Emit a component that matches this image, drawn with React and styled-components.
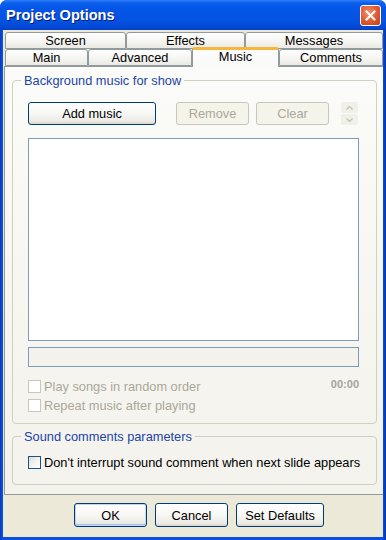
import React from "react";
import styled, { createGlobalStyle } from "styled-components";

const Global = createGlobalStyle`
  html, body { margin: 0; padding: 0; background: #ffffff; }
  body { font-family: "Liberation Sans", Arial, sans-serif; font-size: 12px; }
  * { box-sizing: border-box; }
`;

const Window = styled.div`
  width: 386px;
  height: 540px;
  display: flex;
  flex-direction: column;
  background: linear-gradient(90deg, #0838b8 0, #0a4fe0 2px, #0a4fe0 383px, #0034a8 386px);
  padding: 0 3px 3px 3px;
  border-radius: 7px 7px 0 0;
  overflow: hidden;
`;

const TitleBar = styled.div`
  height: 30px;
  margin: 0 -3px;
  padding: 0 5px 0 6px;
  display: flex;
  align-items: center;
  justify-content: space-between;
  background: linear-gradient(180deg, #2f7cf5 0, #0a5fee 3px, #0556e8 8px, #0453e2 20px, #0449d6 27px, #0040c4 30px);
`;

const Title = styled.span`
  color: #ffffff;
  font-family: "Liberation Sans", Arial, sans-serif;
  font-weight: bold;
  font-size: 14.6px;
  text-shadow: 1px 1px 0 #0a1e78;
`;

const CloseButton = styled.div`
  width: 21px;
  height: 21px;
  margin-top: 1px;
  border: 1px solid #ffffff;
  border-radius: 3px;
  background: radial-gradient(circle at 40% 35%, #f09070 0, #e0582e 55%, #c03c18 100%);
  display: flex;
  align-items: center;
  justify-content: center;
`;

const Client = styled.div`
  flex: 1;
  background: #ece9d8;
  display: flex;
  flex-direction: column;
  padding-top: 2px;
`;

const TabRow = styled.div`
  display: flex;
  padding-left: 2px;
  height: 17px;
  align-items: flex-end;
`;

const Tab = styled.div`
  width: ${(p) => (p.$w ? `${p.$w}px` : "auto")};
  flex: ${(p) => (p.$w ? "none" : "1")};
  height: ${(p) => (p.$active ? 20 : 17)}px;
  border: 1px solid #919b9c;
  border-bottom: ${(p) => (p.$active ? "none" : "1px solid #919b9c")};
  border-radius: 3px 3px 0 0;
  background: ${(p) =>
    p.$active
      ? "linear-gradient(180deg, #fcfcfe 0, #f9f9f6 100%)"
      : "linear-gradient(180deg, #ffffff 0, #f4f4f1 60%, #eae9e3 100%)"};
  border-top: ${(p) => (p.$active ? "3px solid #f5b83c" : "1px solid #919b9c")};
  display: flex;
  align-items: ${(p) => (p.$active ? "flex-start" : "center")};
  justify-content: center;
  padding-top: ${(p) => (p.$active ? 0 : 1)}px;
  font-size: 12.8px;
  color: #000;
  line-height: 14px;
  position: relative;
  z-index: ${(p) => (p.$active ? 2 : 1)};
  margin-bottom: ${(p) => (p.$active ? "-1px" : "0")};
`;

const TabPage = styled.div`
  height: 429px;
  margin-left: 1px;
  border: 1px solid #919b9c;
  border-right: none;
  background: linear-gradient(180deg, #fbfbf9 0, #f6f5f0 60%, #f3f2ec 100%);
  padding: 7px 5px 0 7px;
  display: flex;
  flex-direction: column;
`;

const Group = styled.fieldset`
  margin: ${(p) => p.$mt || 0}px 0 0 0;
  width: 365px;
  border: 1px solid #d0d0bf;
  border-radius: 4px;
  padding: 0 17px ${(p) => p.$pb}px 15px;
  min-width: 0;
`;

const Legend = styled.legend`
  color: #1c45a8;
  font-size: 12.8px;
  line-height: 13px;
  padding: 0 3px;
  margin-left: -7px;
`;

const ButtonRow = styled.div`
  display: flex;
  align-items: center;
  margin-top: 15px;
  height: 23px;
`;

const Button = styled.div`
  width: ${(p) => p.$w}px;
  height: ${(p) => p.$h || 23}px;
  margin-left: ${(p) => p.$ml || 0}px;
  border: 1px solid ${(p) => (p.$disabled ? "#c9c7ba" : "#003c74")};
  border-radius: 3px;
  background: ${(p) =>
    p.$disabled
      ? "#f5f4ea"
      : "linear-gradient(180deg, #ffffff 0, #f7f7f4 50%, #ecebe5 85%, #d8d6cb 100%)"};
  box-shadow: ${(p) => (p.$default ? "inset 0 0 0 1px #c4d6f5, inset 0 -1px 0 1px #a8c0ec" : "none")};
  color: ${(p) => (p.$disabled ? "#aca899" : "#000")};
  font-size: 12.8px;
  display: flex;
  align-items: center;
  justify-content: center;
`;

const Spinner = styled.div`
  width: 17px;
  height: 23px;
  margin-left: 12px;
  display: flex;
  flex-direction: column;
  gap: 1px;
`;

const SpinHalf = styled.div`
  flex: 1;
  background: #f0efe8;
  border-radius: 2px;
  display: flex;
  align-items: center;
  justify-content: center;
`;

const ListBox = styled.div`
  margin-top: 13px;
  width: 331px;
  height: 203px;
  background: #ffffff;
  border: 1px solid #7f9db9;
`;

const Bar = styled.div`
  margin-top: 6px;
  width: 331px;
  height: 20px;
  background: #f3f2ec;
  border: 1px solid #7f9db9;
`;

const OptionsArea = styled.div`
  margin-top: ${(p) => p.$mt}px;
  display: flex;
  flex-direction: column;
  gap: 6px;
  width: 333px;
`;

const OptionLine = styled.div`
  display: flex;
  justify-content: space-between;
  align-items: flex-start;
`;

const CheckRow = styled.label`
  display: flex;
  align-items: center;
  gap: 3px;
  height: 13px;
  color: ${(p) => (p.$disabled ? "#aca899" : "#000")};
  font-size: 12.8px;
  white-space: nowrap;
`;

const Box = styled.span`
  width: 13px;
  height: 13px;
  flex: none;
  border: 1px solid ${(p) => (p.$disabled ? "#c9c7ba" : "#1c5180")};
  background: ${(p) =>
    p.$disabled ? "#ffffff" : "linear-gradient(135deg, #dcdcd7 0, #f6f6f4 60%, #ffffff 100%)"};
`;

const Time = styled.span`
  color: #a5a59c;
  font-weight: bold;
  font-size: 11px;
  margin-top: -2px;
  margin-right: 2px;
`;

const Footer = styled.div`
  flex: 1;
  display: flex;
  align-items: flex-start;
  padding: 8px 0 0 71px;
  gap: 8px;
`;

const Arrow = ({ up }) => (
  <svg width="7" height="4" viewBox="0 0 7 4">
    <path
      d={up ? "M0.5 3.5 L3.5 0.5 L6.5 3.5" : "M0.5 0.5 L3.5 3.5 L6.5 0.5"}
      fill="none"
      stroke="#c2c1b6"
      strokeWidth="1.2"
    />
  </svg>
);

export default function App() {
  return (
    <>
      <Global />
      <Window>
        <TitleBar>
          <Title>Project Options</Title>
          <CloseButton>
            <svg width="11" height="11" viewBox="0 0 11 11">
              <path d="M1.5 1.5 L9.5 9.5 M9.5 1.5 L1.5 9.5" stroke="#fff" strokeWidth="2" strokeLinecap="square" />
            </svg>
          </CloseButton>
        </TitleBar>
        <Client>
          <TabRow>
            <Tab $w={121}>Screen</Tab>
            <Tab $w={119}>Effects</Tab>
            <Tab>Messages</Tab>
          </TabRow>
          <TabRow>
            <Tab $w={83}>Main</Tab>
            <Tab $w={104}>Advanced</Tab>
            <Tab $w={87} $active>
              Music
            </Tab>
            <Tab>Comments</Tab>
          </TabRow>
          <TabPage>
            <Group $pb={11}>
              <Legend>Background music for show</Legend>
              <ButtonRow>
                <Button $w={128}>Add music</Button>
                <Button $w={73} $ml={20} $disabled>
                  Remove
                </Button>
                <Button $w={73} $ml={7} $disabled>
                  Clear
                </Button>
                <Spinner>
                  <SpinHalf>
                    <Arrow up />
                  </SpinHalf>
                  <SpinHalf>
                    <Arrow />
                  </SpinHalf>
                </Spinner>
              </ButtonRow>
              <ListBox />
              <Bar />
              <OptionsArea $mt={13}>
                <OptionLine>
                  <CheckRow $disabled>
                    <Box $disabled />
                    Play songs in random order
                  </CheckRow>
                  <Time>00:00</Time>
                </OptionLine>
                <CheckRow $disabled>
                  <Box $disabled />
                  Repeat music after playing
                </CheckRow>
              </OptionsArea>
            </Group>
            <Group $mt={6} $pb={15}>
              <Legend>Sound comments parameters</Legend>
              <OptionsArea $mt={13}>
                <CheckRow>
                  <Box />
                  Don't interrupt sound comment when next slide appears
                </CheckRow>
              </OptionsArea>
            </Group>
          </TabPage>
          <Footer>
            <Button $w={73} $h={24} $default>
              OK
            </Button>
            <Button $w={73} $h={24}>
              Cancel
            </Button>
            <Button $w={88} $h={24}>
              Set Defaults
            </Button>
          </Footer>
        </Client>
      </Window>
    </>
  );
}
